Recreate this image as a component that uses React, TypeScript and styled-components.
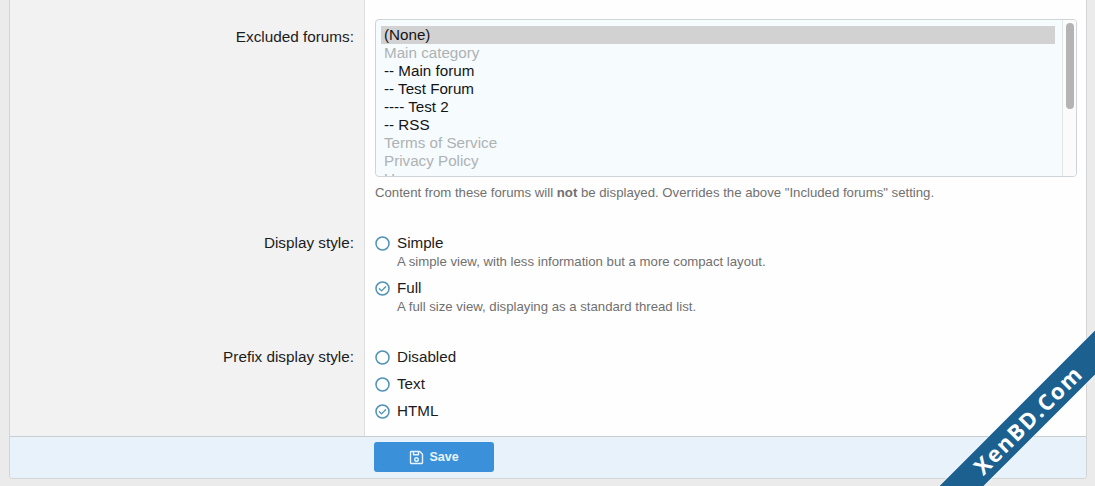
import React from "react";
import styled, { createGlobalStyle } from "styled-components";

const Global = createGlobalStyle`
  html, body {
    margin: 0;
    padding: 0;
    background: #ebebeb;
  }
  body {
    font-family: "Liberation Sans", Arial, sans-serif;
    color: #1c1c1c;
  }
`;

const Page = styled.div`
  position: relative;
  width: 1095px;
  height: 486px;
  overflow: hidden;
  padding: 0 8px 0 9px;
  box-sizing: border-box;
`;

const Panel = styled.form`
  display: flex;
  flex-direction: column;
  height: 479px;
  margin: 0;
  border: 1px solid #d4d4d4;
  border-top: 0;
  border-radius: 0 0 4px 4px;
  box-sizing: border-box;
  overflow: hidden;
  background: #fefefe;
`;

const Rows = styled.div`
  flex: 1;
  display: flex;
  flex-direction: column;
  min-height: 0;
`;

const Row = styled.div<{ $grow?: boolean }>`
  display: grid;
  grid-template-columns: 355px 1fr;
  ${(p) => (p.$grow ? "flex: 1;" : "")}
`;

const Label = styled.div<{ $pad: number }>`
  background: #f2f2f2;
  border-right: 1px solid #dedede;
  text-align: right;
  font-size: 15.3px;
  line-height: 18px;
  padding: ${(p) => p.$pad}px 10px 0 0;
`;

const Control = styled.div<{ $pad: number; $bottom: number }>`
  padding: ${(p) => p.$pad}px 10px ${(p) => p.$bottom}px 10px;
`;

const ListBox = styled.div`
  display: flex;
  width: 702px;
  height: 158px;
  border: 1px solid #cfd4d8;
  border-radius: 4px;
  box-sizing: border-box;
  overflow: hidden;
  background: #f6fbfe;
`;

const Options = styled.div`
  flex: 1;
  height: 151px;
  padding: 6px 7px 0 5px;
  overflow: hidden;
  font-size: 15.2px;
  line-height: 18px;
`;

const Option = styled.div<{ $selected?: boolean; $muted?: boolean }>`
  height: 18px;
  padding-left: 3px;
  white-space: pre;
  color: ${(p) => (p.$muted ? "#aeb2b4" : "#141414")};
  background: ${(p) => (p.$selected ? "#d2d2d2" : "transparent")};
`;

const ScrollTrack = styled.div`
  flex: none;
  width: 14px;
  padding: 3px 2px 0 3px;
  box-sizing: border-box;
  border-left: 1px solid #e4e6e7;
  background: #fbfbfb;
`;

const ScrollThumb = styled.div`
  width: 8px;
  height: 86px;
  border-radius: 4px;
  background: #b4b4b4;
`;

const Hint = styled.div<{ $indent?: boolean }>`
  margin: ${(p) => (p.$indent ? "2px 0 0 22px" : "8px 0 0")};
  font-size: 13.2px;
  line-height: 15px;
  color: #707070;
`;

const Radios = styled.div`
  display: flex;
  flex-direction: column;
`;

const RadioItem = styled.div<{ $gap: number }>`
  margin-bottom: ${(p) => p.$gap}px;
`;

const RadioLine = styled.div`
  display: flex;
  align-items: center;
  gap: 7px;
  height: 18px;
  font-size: 15.2px;
  line-height: 18px;
`;

const Footer = styled.div`
  display: grid;
  grid-template-columns: 355px 1fr;
  flex: none;
  height: 42px;
  border-top: 1px solid #c9ced2;
  box-sizing: border-box;
  background: #e8f2fb;
`;

const FooterActions = styled.div`
  grid-column: 2;
  padding: 5px 0 0 9px;
`;

const SaveButton = styled.button`
  display: flex;
  align-items: center;
  justify-content: center;
  gap: 5px;
  width: 120px;
  height: 30px;
  padding: 0;
  border: 0;
  border-radius: 3px;
  background: #3a90d9;
  color: #e8f4fd;
  font-family: "Liberation Sans", Arial, sans-serif;
  font-size: 12.5px;
  font-weight: 700;
`;

const Ribbon = styled.div`
  position: absolute;
  left: 890px;
  top: 407px;
  width: 270px;
  height: 31px;
  padding-left: 8px;
  box-sizing: border-box;
  transform: rotate(-45deg);
  background: #1b608f;
  box-shadow: 0 0 0 1px rgba(255, 255, 255, 0.55);
  color: #fff;
  font-family: "Open Sans", "DejaVu Sans", sans-serif;
  font-size: 22px;
  font-weight: 700;
  letter-spacing: 1.6px;
  line-height: 31px;
  text-align: center;
`;

function RadioIcon({ checked }: { checked?: boolean }) {
  return (
    <svg width="15" height="15" viewBox="0 0 15 15" fill="none" stroke="#4e93b8" strokeWidth="1.5">
      <circle cx="7.5" cy="7.5" r="6.5" />
      {checked && <path d="M4.4 7.7l2.2 2.2 4-4.2" strokeWidth="1.3" strokeLinecap="round" strokeLinejoin="round" />}
    </svg>
  );
}

function SaveIcon() {
  return (
    <svg width="15" height="15" viewBox="0 0 15 15" fill="none" stroke="#e8f4fd" strokeWidth="1.4" strokeLinejoin="round">
      <path d="M1.5 2.2c0-.4.3-.7.7-.7h8.6l2.7 2.7v8.6c0 .4-.3.7-.7.7H2.2c-.4 0-.7-.3-.7-.7z" />
      <path d="M4.5 1.7v3h5v-3" />
      <circle cx="7.5" cy="9.5" r="1.8" />
    </svg>
  );
}

const forums = [
  { text: "(None)", selected: true },
  { text: "Main category", muted: true },
  { text: "-- Main forum" },
  { text: "-- Test Forum" },
  { text: "---- Test 2" },
  { text: "-- RSS" },
  { text: "Terms of Service", muted: true },
  { text: "Privacy Policy", muted: true },
  { text: "Users", muted: true },
];

export default function App() {
  return (
    <Page>
      <Global />
      <Panel>
        <Rows>
          <Row>
            <Label $pad={28}>Excluded forums:</Label>
            <Control $pad={19} $bottom={26}>
              <ListBox>
                <Options>
                  {forums.map((f) => (
                    <Option key={f.text} $selected={f.selected} $muted={f.muted}>
                      {f.text}
                    </Option>
                  ))}
                </Options>
                <ScrollTrack>
                  <ScrollThumb />
                </ScrollTrack>
              </ListBox>
              <Hint>
                Content from these forums will <b>not</b> be displayed. Overrides the above "Included forums" setting.
              </Hint>
            </Control>
          </Row>
          <Row>
            <Label $pad={8}>Display style:</Label>
            <Control $pad={8} $bottom={26}>
              <Radios>
                <RadioItem $gap={10}>
                  <RadioLine>
                    <RadioIcon />
                    Simple
                  </RadioLine>
                  <Hint $indent>A simple view, with less information but a more compact layout.</Hint>
                </RadioItem>
                <RadioItem $gap={0}>
                  <RadioLine>
                    <RadioIcon checked />
                    Full
                  </RadioLine>
                  <Hint $indent>A full size view, displaying as a standard thread list.</Hint>
                </RadioItem>
              </Radios>
            </Control>
          </Row>
          <Row $grow>
            <Label $pad={8}>Prefix display style:</Label>
            <Control $pad={8} $bottom={0}>
              <Radios>
                <RadioItem $gap={9}>
                  <RadioLine>
                    <RadioIcon />
                    Disabled
                  </RadioLine>
                </RadioItem>
                <RadioItem $gap={9}>
                  <RadioLine>
                    <RadioIcon />
                    Text
                  </RadioLine>
                </RadioItem>
                <RadioItem $gap={0}>
                  <RadioLine>
                    <RadioIcon checked />
                    HTML
                  </RadioLine>
                </RadioItem>
              </Radios>
            </Control>
          </Row>
        </Rows>
        <Footer>
          <FooterActions>
            <SaveButton type="button">
              <SaveIcon />
              Save
            </SaveButton>
          </FooterActions>
        </Footer>
      </Panel>
      <Ribbon>XenBD.Com</Ribbon>
    </Page>
  );
}
